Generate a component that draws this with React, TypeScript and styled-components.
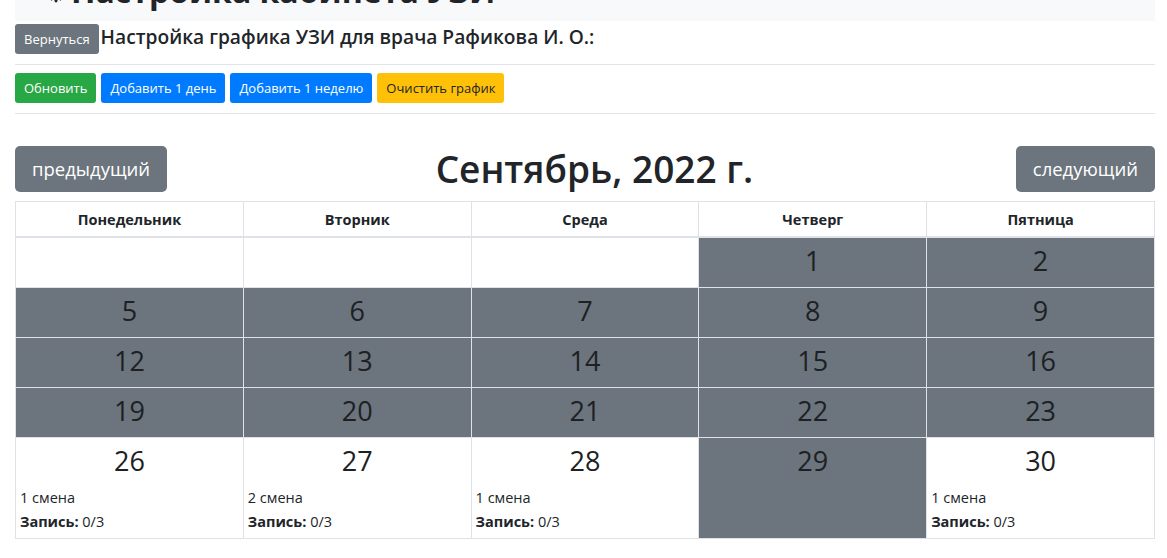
import { createGlobalStyle } from 'styled-components';
import styled from 'styled-components';

type Day = {
  num?: number;
  off?: boolean;
  shift?: string;
  booked?: string;
};

const GlobalStyle = createGlobalStyle`
  body {
    margin: 0;
    background: #fff;
    color: #212529;
    font-family: "Open Sans", "Noto Sans", "Liberation Sans", sans-serif;
    font-size: 14px;
  }
`;

const Page = styled.div`
  width: 1140px;
  padding: 0 12px 40px 15px;
`;

const CabinetHeader = styled.h2`
  margin: -28px 0 0;
  padding: 0 0 11px 33px;
  background: #f8f9fa;
  font-size: 32px;
  line-height: 38px;
  font-weight: 700;
  display: flex;
  align-items: baseline;
  gap: 7px;
`;

const TopRow = styled.div`
  display: flex;
  align-items: flex-start;
  gap: 2px;
  margin-top: 3px;
`;

const Button = styled.button<{ $variant: 'secondary' | 'success' | 'primary' | 'warning'; $size?: 'sm' | 'lg' }>`
  border: 1px solid transparent;
  border-radius: ${({ $size }) => ($size === 'lg' ? '5px' : '3px')};
  font-family: inherit;
  font-size: ${({ $size }) => ($size === 'lg' ? '18.5px' : '13px')};
  line-height: ${({ $size }) => ($size === 'lg' ? '30px' : '18px')};
  padding: ${({ $size }) => ($size === 'lg' ? '7px 16px' : '5px 8px')};
  cursor: pointer;
  white-space: nowrap;
  color: ${({ $variant }) => ($variant === 'warning' ? '#212529' : '#fff')};
  background: ${({ $variant }) =>
    ({ secondary: '#6c757d', success: '#28a745', primary: '#007bff', warning: '#ffc107' }[$variant])};
`;

const DoctorTitle = styled.h5`
  margin: 0;
  font-size: 19.2px;
  line-height: 26px;
  font-weight: 600;
`;

const Divider = styled.hr`
  border: 0;
  border-top: 1px solid #e1e5ea;
  margin: 10px 0 8px;
`;

const Actions = styled.div`
  display: flex;
  gap: 5px;
`;

const CalendarToolbar = styled.div`
  display: flex;
  align-items: center;
  justify-content: space-between;
  margin-top: 31px;
  margin-bottom: 8px;
`;

const MonthTitle = styled.h1`
  margin: 0 0 0 6px;
  font-size: 37px;
  line-height: 48px;
  font-weight: 600;
`;

const Table = styled.table`
  width: 100%;
  border-collapse: collapse;
  table-layout: fixed;
`;

const HeadCell = styled.th`
  border: 1px solid #dee2e6;
  border-bottom-width: 2px;
  height: 34px;
  padding: 0;
  font-size: 14.5px;
  font-weight: 700;
  text-align: center;
`;

const DayCell = styled.td<{ $off?: boolean }>`
  border: 1px solid #dee2e6;
  background: ${({ $off }) => ($off ? '#6c757d' : '#fff')};
  padding: 3px 4px 6px;
  vertical-align: top;
  height: 40px;
`;

const DayNumber = styled.div`
  text-align: center;
  font-size: 27px;
  line-height: 40px;
  color: #1d2124;
`;

const DayInfo = styled.div`
  display: flex;
  flex-direction: column;
  gap: 3px;
  margin-top: 6px;
  font-size: 14.5px;
  line-height: 21px;
`;

const weekdays = ['Понедельник', 'Вторник', 'Среда', 'Четверг', 'Пятница'];

const weeks: Day[][] = [
  [{}, {}, {}, { num: 1, off: true }, { num: 2, off: true }],
  [5, 6, 7, 8, 9].map((n) => ({ num: n, off: true })),
  [12, 13, 14, 15, 16].map((n) => ({ num: n, off: true })),
  [19, 20, 21, 22, 23].map((n) => ({ num: n, off: true })),
  [
    { num: 26, shift: '1 смена', booked: '0/3' },
    { num: 27, shift: '2 смена', booked: '0/3' },
    { num: 28, shift: '1 смена', booked: '0/3' },
    { num: 29, off: true },
    { num: 30, shift: '1 смена', booked: '0/3' },
  ],
];

function CogIcon() {
  return (
    <svg width="16" height="16" viewBox="0 0 16 16" fill="#212529">
      <path d="M8 5.2a2.8 2.8 0 1 0 0 5.6 2.8 2.8 0 0 0 0-5.6zM6.9 0h2.2l.4 2 1.3.6 1.7-1.1 1.6 1.6-1.1 1.7.6 1.3 2 .4v2.2l-2 .4-.6 1.3 1.1 1.7-1.6 1.6-1.7-1.1-1.3.6-.4 2H6.9l-.4-2-1.3-.6-1.7 1.1-1.6-1.6 1.1-1.7-.6-1.3-2-.4V6.9l2-.4.6-1.3-1.1-1.7 1.6-1.6 1.7 1.1 1.3-.6z" />
    </svg>
  );
}

export default function App() {
  return (
    <>
      <GlobalStyle />
      <Page>
        <CabinetHeader>
          <CogIcon />
          Настройка кабинета УЗИ
        </CabinetHeader>

        <TopRow>
          <Button $variant="secondary">Вернуться</Button>
          <DoctorTitle>Настройка графика УЗИ для врача Рафикова И. О.:</DoctorTitle>
        </TopRow>

        <Divider />

        <Actions>
          <Button $variant="success">Обновить</Button>
          <Button $variant="primary">Добавить 1 день</Button>
          <Button $variant="primary">Добавить 1 неделю</Button>
          <Button $variant="warning">Очистить график</Button>
        </Actions>

        <Divider />

        <CalendarToolbar>
          <Button $variant="secondary" $size="lg">предыдущий</Button>
          <MonthTitle>Сентябрь, 2022 г.</MonthTitle>
          <Button $variant="secondary" $size="lg">следующий</Button>
        </CalendarToolbar>

        <Table>
          <thead>
            <tr>
              {weekdays.map((d) => (
                <HeadCell key={d}>{d}</HeadCell>
              ))}
            </tr>
          </thead>
          <tbody>
            {weeks.map((week, wi) => (
              <tr key={wi}>
                {week.map((day, di) => (
                  <DayCell key={di} $off={day.off}>
                    {day.num !== undefined && <DayNumber>{day.num}</DayNumber>}
                    {day.shift && (
                      <DayInfo>
                        <span>{day.shift}</span>
                        <span>
                          <b>Запись:</b> {day.booked}
                        </span>
                      </DayInfo>
                    )}
                  </DayCell>
                ))}
              </tr>
            ))}
          </tbody>
        </Table>
      </Page>
    </>
  );
}
